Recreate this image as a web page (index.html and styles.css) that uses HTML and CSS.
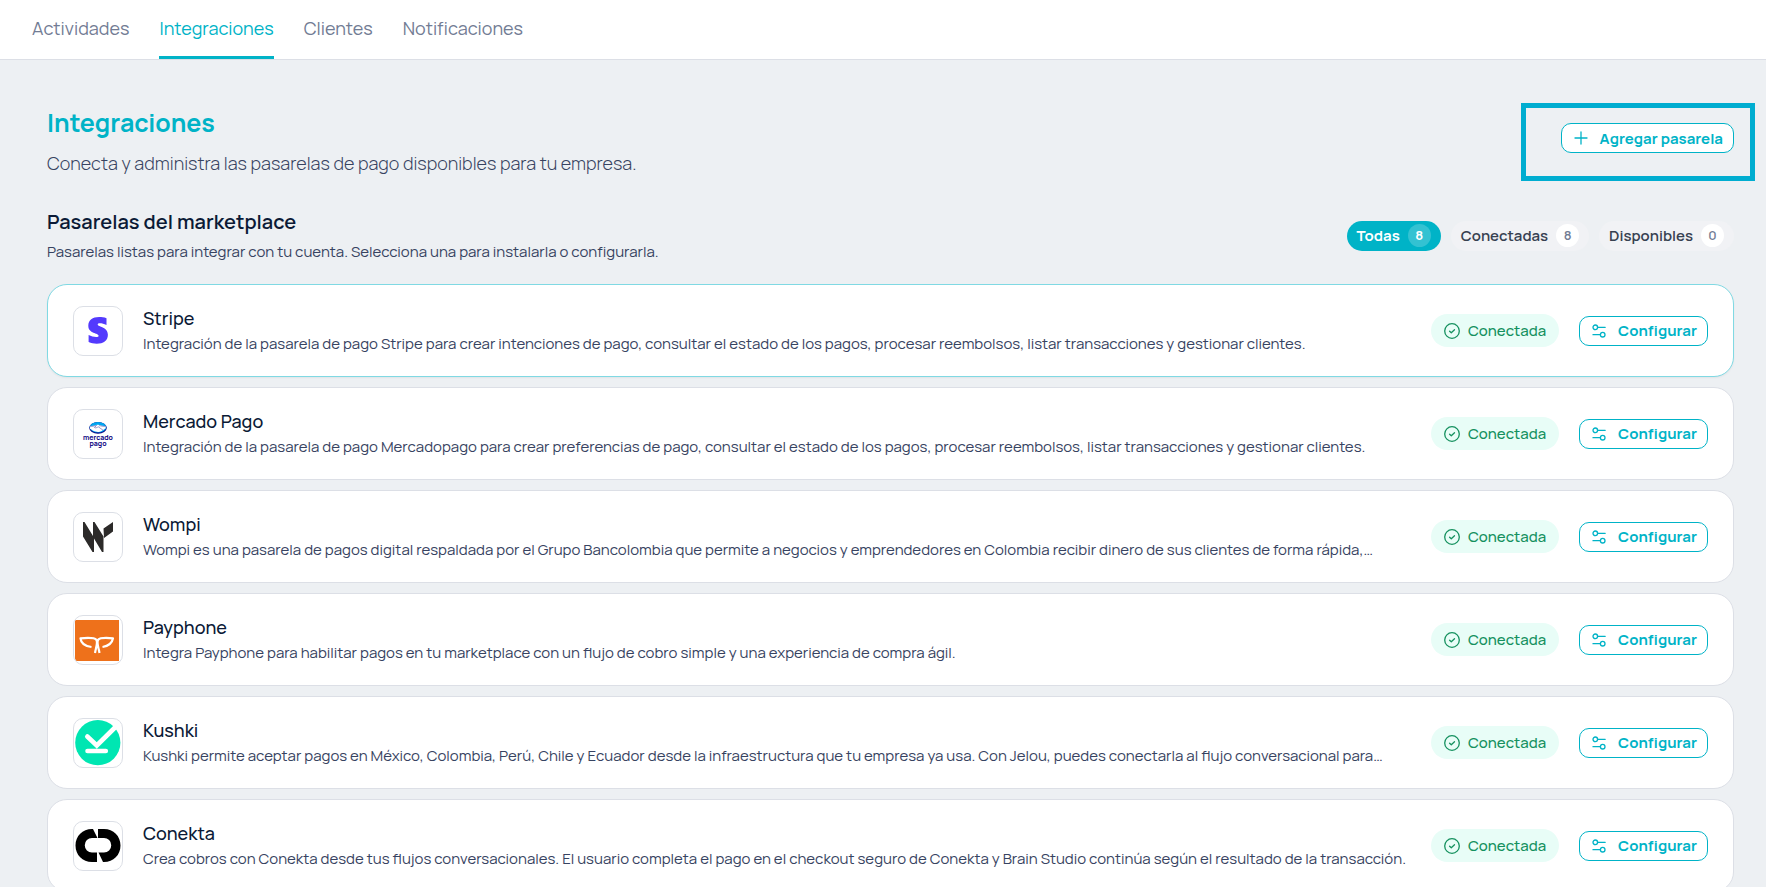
FILE: index.html
```html
<!DOCTYPE html>
<html lang="es">
<head>
  <meta charset="UTF-8">
  <meta name="viewport" content="width=device-width, initial-scale=1.0">
  <title>Integraciones</title>
  <link rel="stylesheet" href="styles.css">
</head>
<body>
  <svg class="sprite" aria-hidden="true">
    <symbol id="icon-check" viewBox="0 0 16 16">
      <circle cx="8" cy="8" r="7.3"/>
      <path d="M5.6 8.2l1.700 1.600 3.200-3"/>
    </symbol>
    <symbol id="icon-settings" viewBox="0 0 14 14">
      <circle cx="3.300" cy="3.300" r="2.300"/>
      <path d="M5.600 3.300h7.600M1 10.700h7.400"/>
      <circle cx="10.700" cy="10.700" r="2.300"/>
    </symbol>
  </svg>

  <nav class="tabs">
    <a href="#actividades">Actividades</a>
    <a href="#integraciones" class="active" aria-current="page">Integraciones</a>
    <a href="#clientes">Clientes</a>
    <a href="#notificaciones">Notificaciones</a>
  </nav>

  <main class="page">
    <header class="page-header">
      <div>
        <h1>Integraciones</h1>
        <p class="lead">Conecta y administra las pasarelas de pago disponibles para tu empresa.</p>
      </div>
      <div class="highlight">
        <button type="button" class="btn">
          <svg class="icon" viewBox="0 0 14 14"><path d="M7 1v12M1 7h12"/></svg>
          Agregar pasarela
        </button>
      </div>
    </header>

    <section>
      <div class="section-header">
        <div>
          <h2>Pasarelas del marketplace</h2>
          <p class="text">Pasarelas listas para integrar con tu cuenta. Selecciona una para instalarla o configurarla.</p>
        </div>
        <div class="filters">
          <button type="button" class="filter selected">Todas <span class="count">8</span></button>
          <button type="button" class="filter">Conectadas <span class="count">8</span></button>
          <button type="button" class="filter">Disponibles <span class="count">0</span></button>
        </div>
      </div>

      <div class="gateways">
        <article class="card current">
          <div class="logo">
            <svg viewBox="0 0 48 48"><path fill="#533afd" d="M32.5 11.200v6.700c-2.400-1.100-4.700-1.600-6.600-1.600-1.500 0-2.200.4-2.200 1.100 0 2.700 10.200 1.700 10.200 10.300 0 6-4.600 9-11.200 9-2.900 0-5.600-.5-8.100-1.600v-7c2.500 1.300 5.200 2 7.500 2 1.600 0 2.500-.4 2.500-1.400 0-2.800-10.300-1.700-10.300-9.900 0-5.500 4.300-8.700 10.800-8.700 2.600 0 5 .3 7.400 1.100z"/></svg>
          </div>
          <div class="info">
            <h3>Stripe</h3>
            <p class="text">Integración de la pasarela de pago Stripe para crear intenciones de pago, consultar el estado de los pagos, procesar reembolsos, listar transacciones y gestionar clientes.</p>
          </div>
          <span class="status"><svg class="icon check"><use href="#icon-check"/></svg>Conectada</span>
          <button type="button" class="btn"><svg class="icon"><use href="#icon-settings"/></svg>Configurar</button>
        </article>

        <article class="card">
          <div class="logo">
            <svg viewBox="0 0 48 48">
              <ellipse cx="24" cy="17.800" rx="8.800" ry="5.900" fill="#0a0080"/>
              <ellipse cx="24" cy="17.300" rx="8.300" ry="5.200" fill="#00a6f0"/>
              <path d="M16.200 15.800c3 .7 4.800-1.300 7.800-1.100s4.800 1.800 7.800 1.100l-.2 2.700c-2 .5-3 2.900-7 3.400-4 .3-7-2.400-8.600-3.200z" fill="#fff"/>
              <path d="M16 16.300c3 .5 5-.8 6.500-.8l-2 2c1.500 1 2.500-.4 4-.6l4.500 3.300M32 16.300c-3 .5-5-.6-7-.6" fill="none" stroke="#0a0080" stroke-width=".4"/>
              <text class="mp-word" x="24" y="30">mercado</text>
              <text class="mp-word" x="24" y="36">pago</text>
            </svg>
          </div>
          <div class="info">
            <h3>Mercado Pago</h3>
            <p class="text">Integración de la pasarela de pago Mercadopago para crear preferencias de pago, consultar el estado de los pagos, procesar reembolsos, listar transacciones y gestionar clientes.</p>
          </div>
          <span class="status"><svg class="icon check"><use href="#icon-check"/></svg>Conectada</span>
          <button type="button" class="btn"><svg class="icon"><use href="#icon-settings"/></svg>Configurar</button>
        </article>

        <article class="card">
          <div class="logo">
            <svg viewBox="0 0 48 48">
              <path fill="#2c2a29" d="M9 9h1.500l8.500 14V9h1.500l9 14.500V39H28l-8-13.500V39h-1.500L9 23.500zM29.500 15.500L39 9v9.500L30 25z"/>
            </svg>
          </div>
          <div class="info">
            <h3>Wompi</h3>
            <p class="text">Wompi es una pasarela de pagos digital respaldada por el Grupo Bancolombia que permite a negocios y emprendedores en Colombia recibir dinero de sus clientes de forma rápida,…</p>
          </div>
          <span class="status"><svg class="icon check"><use href="#icon-check"/></svg>Conectada</span>
          <button type="button" class="btn"><svg class="icon"><use href="#icon-settings"/></svg>Configurar</button>
        </article>

        <article class="card">
          <div class="logo">
            <svg viewBox="0 0 48 48">
              <path fill="#ee711b" d="M1 4h44v41H1z"/>
              <path fill="none" stroke="#fff" stroke-width="2.200" stroke-linejoin="round" d="M17.500 31c-5.500-.8-10.500-3.200-11-8.700 5-.5 14-.7 15.800 1.400 2 3-.6 8.500-1.300 13.300M28.500 31c5.500-.8 9.500-3.200 10.500-8.700-5-.5-13-.7-14.800 1.400-2 3 .6 8.500 1.300 13.300"/>
            </svg>
          </div>
          <div class="info">
            <h3>Payphone</h3>
            <p class="text">Integra Payphone para habilitar pagos en tu marketplace con un flujo de cobro simple y una experiencia de compra ágil.</p>
          </div>
          <span class="status"><svg class="icon check"><use href="#icon-check"/></svg>Conectada</span>
          <button type="button" class="btn"><svg class="icon"><use href="#icon-settings"/></svg>Configurar</button>
        </article>

        <article class="card">
          <div class="logo">
            <svg viewBox="0 0 48 48">
              <circle cx="23.800" cy="23.700" r="22.600" fill="#00e6b2"/>
              <path fill="none" stroke="#fff" stroke-width="4.600" stroke-linecap="round" d="M13.500 32h18.300M13.300 17.500l9.500 9L42 7.500"/>
            </svg>
          </div>
          <div class="info">
            <h3>Kushki</h3>
            <p class="text">Kushki permite aceptar pagos en México, Colombia, Perú, Chile y Ecuador desde la infraestructura que tu empresa ya usa. Con Jelou, puedes conectarla al flujo conversacional para…</p>
          </div>
          <span class="status"><svg class="icon check"><use href="#icon-check"/></svg>Conectada</span>
          <button type="button" class="btn"><svg class="icon"><use href="#icon-settings"/></svg>Configurar</button>
        </article>

        <article class="card">
          <div class="logo">
            <svg viewBox="0 0 48 48">
              <path d="M18 7h1l4.500 9H18a7 7 0 0 0 0 14.500h5V40h-5C8.500 40 1.500 33 1.500 23.500S8.500 7 18 7z"/>
              <path d="M24 7h6c9.500 0 16.500 7 16.500 16.500S39.500 40 30 40h-1l-4.500-9.500H30A7 7 0 0 0 30 16h-6z"/>
            </svg>
          </div>
          <div class="info">
            <h3>Conekta</h3>
            <p class="text">Crea cobros con Conekta desde tus flujos conversacionales. El usuario completa el pago en el checkout seguro de Conekta y Brain Studio continúa según el resultado de la transacción.</p>
          </div>
          <span class="status"><svg class="icon check"><use href="#icon-check"/></svg>Conectada</span>
          <button type="button" class="btn"><svg class="icon"><use href="#icon-settings"/></svg>Configurar</button>
        </article>
      </div>
    </section>
  </main>
</body>
</html>
```
FILE: styles.css
```css
* { box-sizing: border-box; }
html { height: 100%; overflow: hidden; }
body { margin: 0; background: #edf0f3; color: #374361; font-family: Manrope, Inter, sans-serif; }
h1, h2, h3, p { margin: 0; }
button { font-family: inherit; cursor: pointer; }
.sprite { display: none; }

.tabs { display: flex; gap: 30px; height: 60px; padding: 0 32px; background: #fff; border-bottom: 1px solid #dcdfe6; }
.tabs a { display: flex; align-items: center; border-bottom: 3px solid transparent; color: #727c94; font-size: 18px; text-decoration: none; }
.tabs a.active { color: #00b3c7; border-bottom-color: #00b3c7; }

.page { padding: 46px 32px 32px 47px; }
.page-header, .section-header { display: flex; justify-content: space-between; }
.page-header { align-items: flex-start; }
h1 { color: #00b3c7; font-size: 25px; font-weight: 700; line-height: 34px; }
.lead { margin-top: 10px; font-size: 18px; font-weight: 300; line-height: 27px; }

.highlight { position: relative; padding-top: 17px; }
.highlight::after { content: ""; position: absolute; inset: -3px -21px -28px -40px; border: 5px solid #00add0; pointer-events: none; }

.btn { display: flex; align-items: center; gap: 12px; flex: none; height: 30px; padding: 0 10px 0 12px; background: #fff; border: 1px solid #00b3c7; border-radius: 10px; color: #00b3c7; font-size: 15px; font-weight: 700; }
.icon { width: 14px; height: 14px; flex: none; fill: none; stroke: currentColor; stroke-width: 1.3; stroke-linecap: round; stroke-linejoin: round; }
.icon.check { width: 16px; height: 16px; }

.section-header { align-items: center; margin-top: 30px; margin-bottom: 20px; }
h2 { color: #0b1a36; font-size: 20px; font-weight: 600; line-height: 30px; }
.text { font-size: 15px; line-height: 24px; }
.section-header .text { margin-top: 3px; }

.filters { display: flex; gap: 10px; }
.filter { display: flex; align-items: center; gap: 8px; height: 30px; padding: 0 10px; background: #f1f2f5; border: 0; border-radius: 15px; color: #374151; font-size: 15px; font-weight: 600; }
.filter.selected { background: #00b3c7; color: #fff; font-weight: 700; }
.count { width: 23px; border-radius: 50%; background: #fff; color: #727c94; font-size: 13px; line-height: 23px; }
.selected .count { background: #33c2d2; color: #fff; }

.gateways { display: grid; gap: 10px; }
.card { display: flex; align-items: center; padding: 20px 25px; background: #fff; border: 1px solid #dcdfe6; border-radius: 20px; }
.card.current { border-color: #80d9e3; box-shadow: 0 1px 2px #0000000d; }
.logo { flex: none; width: 50px; height: 50px; margin-right: 20px; border: 1px solid #dcdfe6; border-radius: 10px; overflow: hidden; }
.logo svg { display: block; width: 100%; height: 100%; }
.mp-word { fill: #0a0080; font-size: 7px; font-weight: 700; text-anchor: middle; }
.info { flex: 1; min-width: 0; }
h3 { color: #0b1a36; font-size: 18px; font-weight: 500; line-height: 27px; }
.info .text { white-space: nowrap; }
.status { display: flex; align-items: center; gap: 8px; flex: none; height: 33px; margin: 0 20px; padding: 0 13px; border-radius: 17px; background: #e8fdf7; color: #15915f; font-size: 15px; font-weight: 500; }
```
